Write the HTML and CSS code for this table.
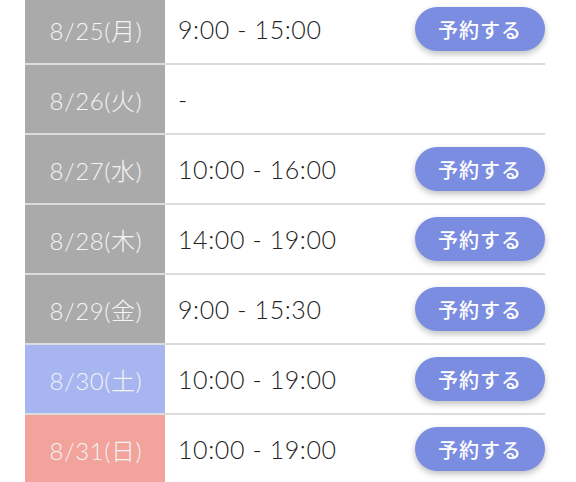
FILE: index.html
```html
<!DOCTYPE html>
<html lang="ja">
<head>
<meta charset="utf-8">
<link rel="stylesheet" href="styles.css">
</head>
<body>
<div class="schedule">
  <div class="row"><div class="day weekday">8/25(月)</div><div class="slot"><span class="time">9:00 - 15:00</span><button class="reserve">予約する</button></div></div>
  <div class="row"><div class="day weekday">8/26(火)</div><div class="slot"><span class="time">-</span></div></div>
  <div class="row"><div class="day weekday">8/27(水)</div><div class="slot"><span class="time">10:00 - 16:00</span><button class="reserve">予約する</button></div></div>
  <div class="row"><div class="day weekday">8/28(木)</div><div class="slot"><span class="time">14:00 - 19:00</span><button class="reserve">予約する</button></div></div>
  <div class="row"><div class="day weekday">8/29(金)</div><div class="slot"><span class="time">9:00 - 15:30</span><button class="reserve">予約する</button></div></div>
  <div class="row"><div class="day saturday">8/30(土)</div><div class="slot"><span class="time">10:00 - 19:00</span><button class="reserve">予約する</button></div></div>
  <div class="row"><div class="day sunday">8/31(日)</div><div class="slot"><span class="time">10:00 - 19:00</span><button class="reserve">予約する</button></div></div>
</div>
</body>
</html>
```
FILE: styles.css
```css
html, body {
  margin: 0;
  padding: 0;
  background: #fff;
  overflow: hidden;
}
body {
  font-family: Lato, "Noto Sans CJK JP", sans-serif;
}
.schedule {
  width: 520px;
  margin: -5px 0 0 25px;
  display: flex;
  flex-direction: column;
}
.row {
  display: flex;
  height: 70px;
  box-sizing: border-box;
  border-bottom: 2px solid #dcdcdc;
}
.day {
  width: 140px;
  flex: none;
  display: flex;
  align-items: center;
  justify-content: center;
  color: #f4f4f4;
  font-size: 24px;
  font-weight: 300;
  letter-spacing: 0.6px;
  padding-left: 2px;
  box-sizing: border-box;
}
.weekday { background: #aaaaaa; }
.saturday { background: #a7b5f1; }
.sunday { background: #f2a39b; }
.slot {
  flex: 1;
  display: flex;
  align-items: center;
  justify-content: space-between;
  padding-left: 13px;
}
.time {
  font-size: 25px;
  font-weight: 300;
  color: #222;
  letter-spacing: 0.6px;
}
.reserve {
  width: 130px;
  height: 44px;
  border: none;
  border-radius: 22px;
  background: #7b8de0;
  color: #fff;
  font-family: "Noto Sans CJK JP", sans-serif;
  font-size: 20px;
  font-weight: 500;
  letter-spacing: 1px;
  box-shadow: 0 3px 6px rgba(0, 0, 0, 0.25);
  padding: 0;
}
```
